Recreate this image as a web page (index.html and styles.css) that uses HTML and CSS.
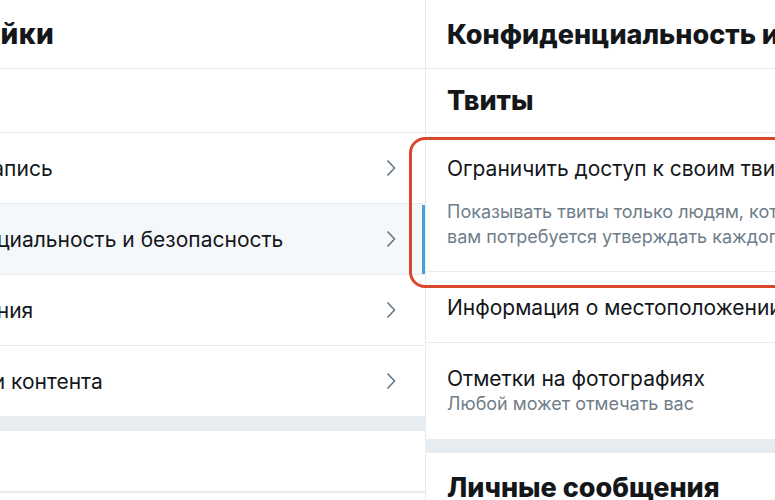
FILE: index.html
```html
<!DOCTYPE html>
<html>
	<head>
		<meta charset="utf-8">
		<title>Настройки</title>
		<link rel="stylesheet" href="styles.css">
	</head>
	<body>
		<div class="page">
			<!-- список разделов -->
			<aside class="menu">
				<h2 class="head">Настройки</h2>
				<div class="account"></div>
				<ul>
					<li class="item">Учётная запись<svg class="chev" viewBox="0 0 10 18"><path d="M1.5 1.5 L8.5 9 L1.5 16.5"/></svg></li>
					<li class="item active">Конфиденциальность и безопасность<svg class="chev" viewBox="0 0 10 18"><path d="M1.5 1.5 L8.5 9 L1.5 16.5"/></svg></li>
					<li class="item">Уведомления<svg class="chev" viewBox="0 0 10 18"><path d="M1.5 1.5 L8.5 9 L1.5 16.5"/></svg></li>
					<li class="item">Настройки контента<svg class="chev" viewBox="0 0 10 18"><path d="M1.5 1.5 L8.5 9 L1.5 16.5"/></svg></li>
				</ul>
				<div class="band"></div>
				<div class="blank"></div>
			</aside>

			<!-- содержимое раздела -->
			<main class="detail">
				<h2 class="head">Конфиденциальность и безопасность</h2>
				<h3 class="section">Твиты</h3>
				<div class="opt protect">
					<div class="title">Ограничить доступ к своим твитам</div>
					<div class="desc">Показывать твиты только людям, которые читают вас. Если этот параметр включен,<br>вам потребуется утверждать каждого нового читателя.</div>
				</div>
				<div class="opt">
					<div class="title">Информация о местоположении</div>
				</div>
				<div class="opt">
					<div class="title">Отметки на фотографиях</div>
					<div class="sub">Любой может отмечать вас</div>
				</div>
				<div class="band"></div>
				<h3 class="section dm">Личные сообщения</h3>
			</main>

			<div class="mark"></div>
		</div>
	</body>
</html>
```

FILE: styles.css
```css
html, body {
	margin: 0;
	padding: 0;
	background: #fff;
	overflow: hidden;
	height: 500px;
}
* {
	box-sizing: border-box;
}
ul, li, h2, h3 {
	margin: 0;
	padding: 0;
	list-style: none;
}
.page {
	position: relative;
	display: flex;
	width: 1200px;
	font-family: Inter, "Noto Sans", sans-serif;
	color: #14171a;
}

/* левая колонка */
.menu {
	width: 553px;
	margin-left: -127px;
	flex: none;
	border-right: 1px solid #e6ecf0;
}
.head {
	height: 69px;
	border-bottom: 1px solid #e6ecf0;
	display: flex;
	align-items: center;
	font-size: 27px;
	font-weight: 800;
	padding: 0 21px;
	white-space: nowrap;
}
.menu .head {
	font-size: 28px;
	letter-spacing: .4px;
}
.account {
	height: 64px;
	border-bottom: 1px solid #e6ecf0;
}
.item {
	height: 71px;
	border-bottom: 1px solid #e6ecf0;
	display: flex;
	align-items: center;
	justify-content: space-between;
	padding: 0 28px 0 21px;
	font-size: 21px;
	white-space: nowrap;
	position: relative;
}
.item.active {
	background: #f5f8fa;
}
.item.active::after {
	content: "";
	position: absolute;
	right: 0;
	top: 1px;
	bottom: 0;
	width: 3px;
	background: #4d9fdc;
}
.chev {
	width: 12px;
	height: 18px;
	fill: none;
	stroke: #657786;
	stroke-width: 1.6;
}
.band {
	height: 14px;
	background: #e6ecf0;
}
.blank {
	height: 62px;
	border-bottom: 2px solid #e6ecf0;
}

/* правая колонка */
.detail {
	width: 600px;
	flex: none;
}
.section {
	height: 64px;
	border-bottom: 1px solid #e6ecf0;
	display: flex;
	align-items: center;
	padding: 0 21px;
	font-size: 27px;
	font-weight: 800;
}
.section.dm {
	border-bottom: 0;
	padding-top: 4px;
}
.opt {
	padding: 24px 21px 0;
	white-space: nowrap;
	height: 71px;
	border-bottom: 1px solid #e6ecf0;
}
.opt:nth-of-type(3) {
	height: 96px;
	border-bottom: 0;
}
.opt.protect {
	height: 139px;
}
.title {
	font-size: 21px;
	line-height: 24px;
}
.desc, .sub {
	font-size: 18px;
	line-height: 25px;
	color: #6f7d8a;
}
.desc {
	margin-top: 18px;
}

/* красная рамка поверх настройки */
.mark {
	position: absolute;
	left: 409px;
	top: 137px;
	width: 420px;
	height: 151px;
	border: 3px solid #d9472f;
	border-radius: 16px;
}
```
